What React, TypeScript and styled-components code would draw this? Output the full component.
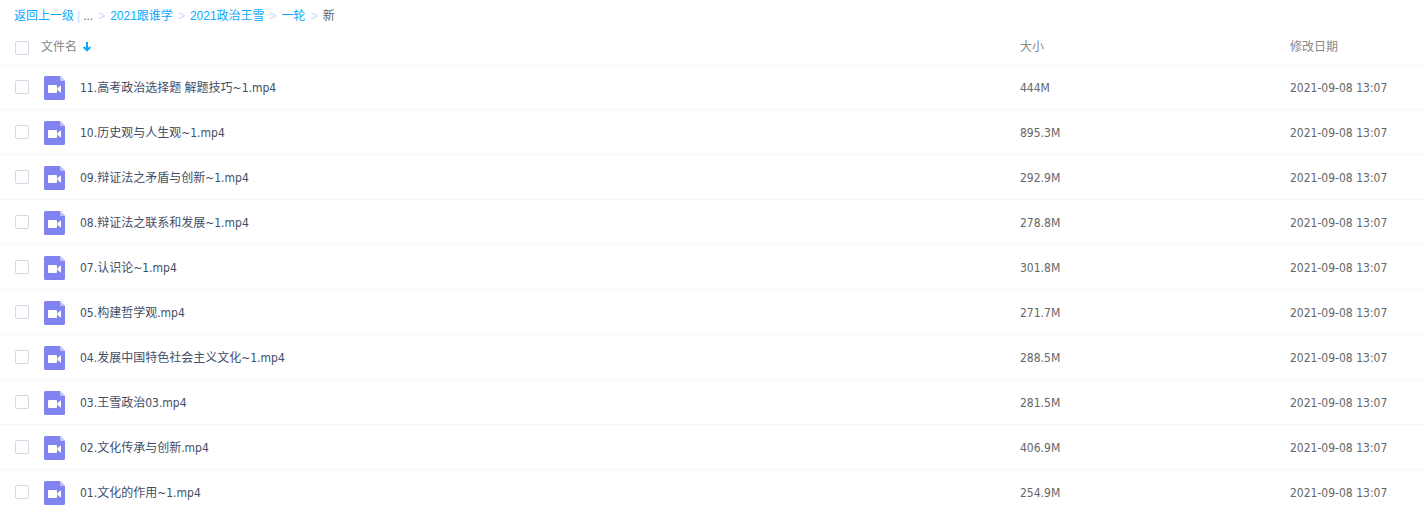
import React, { useState } from 'react';
import styled, { createGlobalStyle } from 'styled-components';

const GlobalStyle = createGlobalStyle`
  *, *::before, *::after { box-sizing: border-box; }
  body {
    margin: 0;
    background: #fff;
    color: #424e67;
    font: 12px/20px "DejaVu Sans Condensed", "Noto Sans", "Noto Sans CJK SC", sans-serif;
  }
`;

const Page = styled.main`
  width: 100%;
  overflow: hidden;
`;

const Breadcrumb = styled.nav`
  padding: 6px 14px 2px;
  color: #666;
  white-space: nowrap;
  font-family: "Liberation Sans", "Noto Sans CJK SC", sans-serif;
`;

const Crumbs = styled.ol`
  display: flex;
  margin: 0;
  padding: 0;
  list-style: none;
`;

const CrumbLink = styled.a`
  color: #09aaff;
  text-decoration: none;
`;

const Separator = styled.span<{ $gap: number }>`
  margin: 0 ${({ $gap }) => $gap}px;
  color: #c4dbfe;
`;

const FileTable = styled.table`
  width: 100%;
  table-layout: fixed;
  border-collapse: separate;
  border-spacing: 0;
`;

const CheckColumn = styled.col`
  width: 41px;
`;

const SizeColumn = styled.col`
  width: 270px;
`;

const DateColumn = styled.col`
  width: 136px;
`;

const HeadRow = styled.tr`
  height: 37px;
`;

const HeadCell = styled.th`
  padding: 0;
  color: #888;
  font-weight: 400;
  text-align: left;
`;

const HeadCheckCell = styled.td`
  padding: 3px 0 0 15px;
`;

const SortButton = styled.button`
  display: flex;
  align-items: center;
  gap: 6px;
  padding: 0;
  border: 0;
  background: none;
  color: inherit;
  font: inherit;
`;

const Cell = styled.td`
  padding: 2px 0 0;
  border-bottom: 1px solid #f2f6fd;
  color: #666;
  white-space: nowrap;
`;

const Row = styled.tr`
  height: 45px;

  &:first-child > ${Cell} {
    box-shadow: inset 0 1px #f2f6fd;
  }
`;

const CheckCell = styled(Cell)`
  padding: 0 0 0 15px;
`;

const Checkbox = styled.input`
  display: block;
  appearance: none;
  width: 14px;
  height: 14px;
  margin: 0;
  border: 1px solid #d3dae4;
  border-radius: 2px;
  background: #fff;

  &:checked {
    border-color: #09aaff;
    background: #09aaff;
  }
`;

const FileLabel = styled.div`
  display: flex;
  align-items: center;
  gap: 15px;
  padding-left: 3px;
`;

const FileIcon = styled.svg`
  flex: none;
`;

const FileLink = styled.a`
  color: #424e67;
  text-decoration: none;
`;

const VideoIcon = () => (
  <FileIcon width="21" height="24" viewBox="0 0 21 24" aria-hidden="true">
    <path d="M1.500 0H16l5 5v17.500a1.500 1.500 0 0 1-1.500 1.500h-18A1.500 1.500 0 0 1 0 22.500v-21A1.500 1.500 0 0 1 1.500 0z" fill="#8183f1" />
    <path d="M16 0l5 5h-4a1 1 0 0 1-1-1z" fill="#c0c1f8" />
    <rect x="4" y="9" width="9" height="8" rx="1" fill="#fff" />
    <path d="M17 9.200v7.600l-3.200-2.600-.3-.2v-2l.3-.2z" fill="#fff" />
  </FileIcon>
);

const ArrowIcon = () => (
  <svg width="8" height="10" viewBox="0 0 8 10" aria-hidden="true">
    <path d="M4 0v8M.700 5L4 8.300 7.300 5" fill="none" stroke="#09aaff" strokeWidth="2" />
  </svg>
);

const parents = ['2021跟谁学', '2021政治王雪', '一轮'];

const files = [
  { name: '11.高考政治选择题 解题技巧~1.mp4', size: '444M' },
  { name: '10.历史观与人生观~1.mp4', size: '895.3M' },
  { name: '09.辩证法之矛盾与创新~1.mp4', size: '292.9M' },
  { name: '08.辩证法之联系和发展~1.mp4', size: '278.8M' },
  { name: '07.认识论~1.mp4', size: '301.8M' },
  { name: '05.构建哲学观.mp4', size: '271.7M' },
  { name: '04.发展中国特色社会主义文化~1.mp4', size: '288.5M' },
  { name: '03.王雪政治03.mp4', size: '281.5M' },
  { name: '02.文化传承与创新.mp4', size: '406.9M' },
  { name: '01.文化的作用~1.mp4', size: '254.9M' },
];

export default function App() {
  const [selected, setSelected] = useState<string[]>([]);
  const allSelected = selected.length === files.length;
  const toggle = (name: string) =>
    setSelected((prev) => (prev.includes(name) ? prev.filter((n) => n !== name) : [...prev, name]));

  return (
    <Page>
      <GlobalStyle />
      <Breadcrumb aria-label="路径">
        <Crumbs>
          <li>
            <CrumbLink href="#up">返回上一级</CrumbLink>
            <Separator $gap={3}>|</Separator>
          </li>
          <li>...</li>
          {parents.map((label) => (
            <li key={label}>
              <Separator $gap={5}>&gt;</Separator>
              <CrumbLink href="#folder">{label}</CrumbLink>
            </li>
          ))}
          <li aria-current="page">
            <Separator $gap={5}>&gt;</Separator>新
          </li>
        </Crumbs>
      </Breadcrumb>
      <FileTable>
        <colgroup>
          <CheckColumn />
          <col />
          <SizeColumn />
          <DateColumn />
        </colgroup>
        <thead>
          <HeadRow>
            <HeadCheckCell>
              <Checkbox
                type="checkbox"
                aria-label="全选"
                checked={allSelected}
                onChange={() => setSelected(allSelected ? [] : files.map((f) => f.name))}
              />
            </HeadCheckCell>
            <HeadCell scope="col" aria-sort="descending">
              <SortButton type="button">
                文件名
                <ArrowIcon />
              </SortButton>
            </HeadCell>
            <HeadCell scope="col">大小</HeadCell>
            <HeadCell scope="col">修改日期</HeadCell>
          </HeadRow>
        </thead>
        <tbody>
          {files.map(({ name, size }) => (
            <Row key={name}>
              <CheckCell>
                <Checkbox
                  type="checkbox"
                  aria-label={name}
                  checked={selected.includes(name)}
                  onChange={() => toggle(name)}
                />
              </CheckCell>
              <Cell>
                <FileLabel>
                  <VideoIcon />
                  <FileLink href="#file">{name}</FileLink>
                </FileLabel>
              </Cell>
              <Cell>{size}</Cell>
              <Cell>2021-09-08 13:07</Cell>
            </Row>
          ))}
        </tbody>
      </FileTable>
    </Page>
  );
}
